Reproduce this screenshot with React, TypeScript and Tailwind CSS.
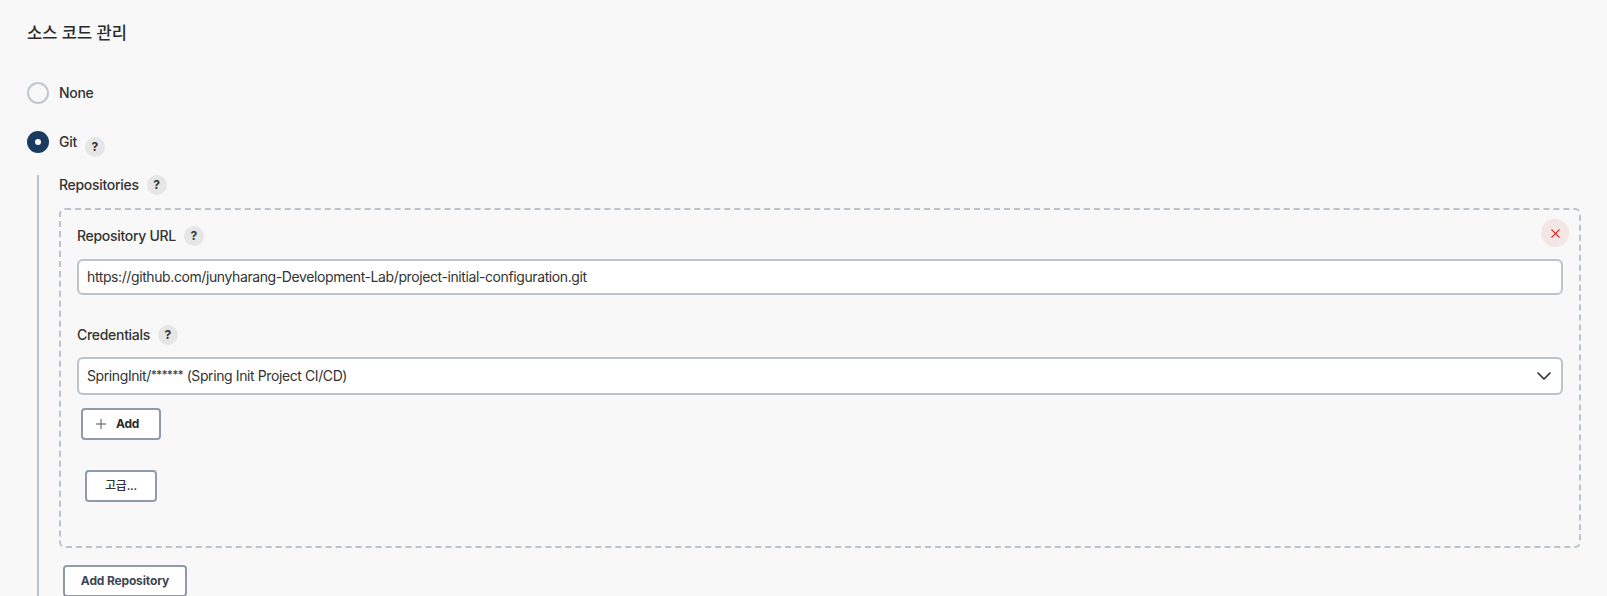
import { ChevronDown, Plus, X } from 'lucide-react'

function Help({ className = '' }: { className?: string }) {
  return (
    <span className={`flex h-5 w-5 shrink-0 items-center justify-center rounded-full bg-[#e6e6e6] text-xs font-bold tracking-normal text-[#333] ${className}`}>
      ?
    </span>
  )
}

function Label({ text, help }: { text: string; help: string }) {
  return (
    <div className={`flex h-5 items-center ${help}`}>
      <span className="text-sm font-medium tracking-[-0.3px] text-[#333]">{text}</span>
      <Help />
    </div>
  )
}

export default function App() {
  return (
    <div className="h-[596px] overflow-hidden bg-[#f8f8f8] pl-[27px] pr-[26px] pt-[22px] font-['Inter','Noto_Sans_CJK_KR',sans-serif] text-[#333]">
      <h2 className="h-[22px] text-[16.5px] leading-[22px] font-medium text-[#2b2b2b]">소스 코드 관리</h2>

      <div className="mt-[38px] flex h-[22px] items-center gap-[10px]">
        <span className="h-[22px] w-[22px] rounded-full border-2 border-[#c0c7ce] bg-[#f8f8f8]" />
        <span className="text-sm font-medium tracking-[-0.3px]">None</span>
      </div>

      <div className="mt-[27px] flex h-[22px] items-center gap-[10px]">
        <span className="flex h-[22px] w-[22px] items-center justify-center rounded-full bg-[#1b3a5f]">
          <span className="h-[6px] w-[6px] rounded-full bg-white" />
        </span>
        <span className="text-sm font-medium tracking-[-0.3px]">Git</span>
        <Help className="mt-[9px] -ml-[2px]" />
      </div>

      <div className="mt-[22px] ml-[10px] border-l-2 border-[#bcc3ca] pl-5">
        <Label text="Repositories" help="gap-2" />

        <div className="relative mt-[13px] h-[340px] rounded-md border-2 border-dashed border-[#bcc3ca] px-4 pt-4">
          <button className="absolute top-[9px] right-[10px] flex h-7 w-7 items-center justify-center rounded-full bg-[#f5e6e6] text-[#d9302c]">
            <X size={15} strokeWidth={1.75} />
          </button>

          <Label text="Repository URL" help="gap-2" />
          <div className="mt-[13px] flex h-9 items-center rounded-md border-2 border-[#bcc3ca] bg-white px-2 text-sm tracking-[-0.4px] text-[#333]">
            https://github.com/junyharang-Development-Lab/project-initial-configuration.git
          </div>

          <Label text="Credentials" help="mt-[30px] gap-2" />
          <div className="mt-3 flex h-[38px] items-center justify-between rounded-md border-2 border-[#bcc3ca] bg-white pr-[5px] pl-2 text-sm tracking-[-0.4px] text-[#333]">
            <span>
              SpringInit/<span className="align-[2px] text-[11.5px]">******</span> (Spring Init Project CI/CD)
            </span>
            <ChevronDown size={24} strokeWidth={1.75} />
          </div>

          <button className="mt-[13px] ml-1 flex h-8 w-20 items-center gap-[7px] rounded-[4px] border-2 border-[#8f9ba8] bg-white pl-[10px] text-xs font-bold tracking-[-0.2px] text-[#2b2b2b]">
            <Plus size={16} strokeWidth={1.5} className="text-[#555]" />
            Add
          </button>

          <button className="mt-[30px] ml-2 flex h-8 w-[72px] items-center justify-center rounded-[4px] border-2 border-[#8f9ba8] bg-white text-xs tracking-[-0.2px] font-medium text-[#333]">
            고급...
          </button>
        </div>

        <button className="mt-[17px] ml-1 flex h-8 w-[124px] items-center justify-center rounded-[4px] border-2 border-[#8f9ba8] bg-white text-xs font-bold tracking-[-0.15px] text-[#3d4653]">
          Add Repository
        </button>
      </div>
    </div>
  )
}
